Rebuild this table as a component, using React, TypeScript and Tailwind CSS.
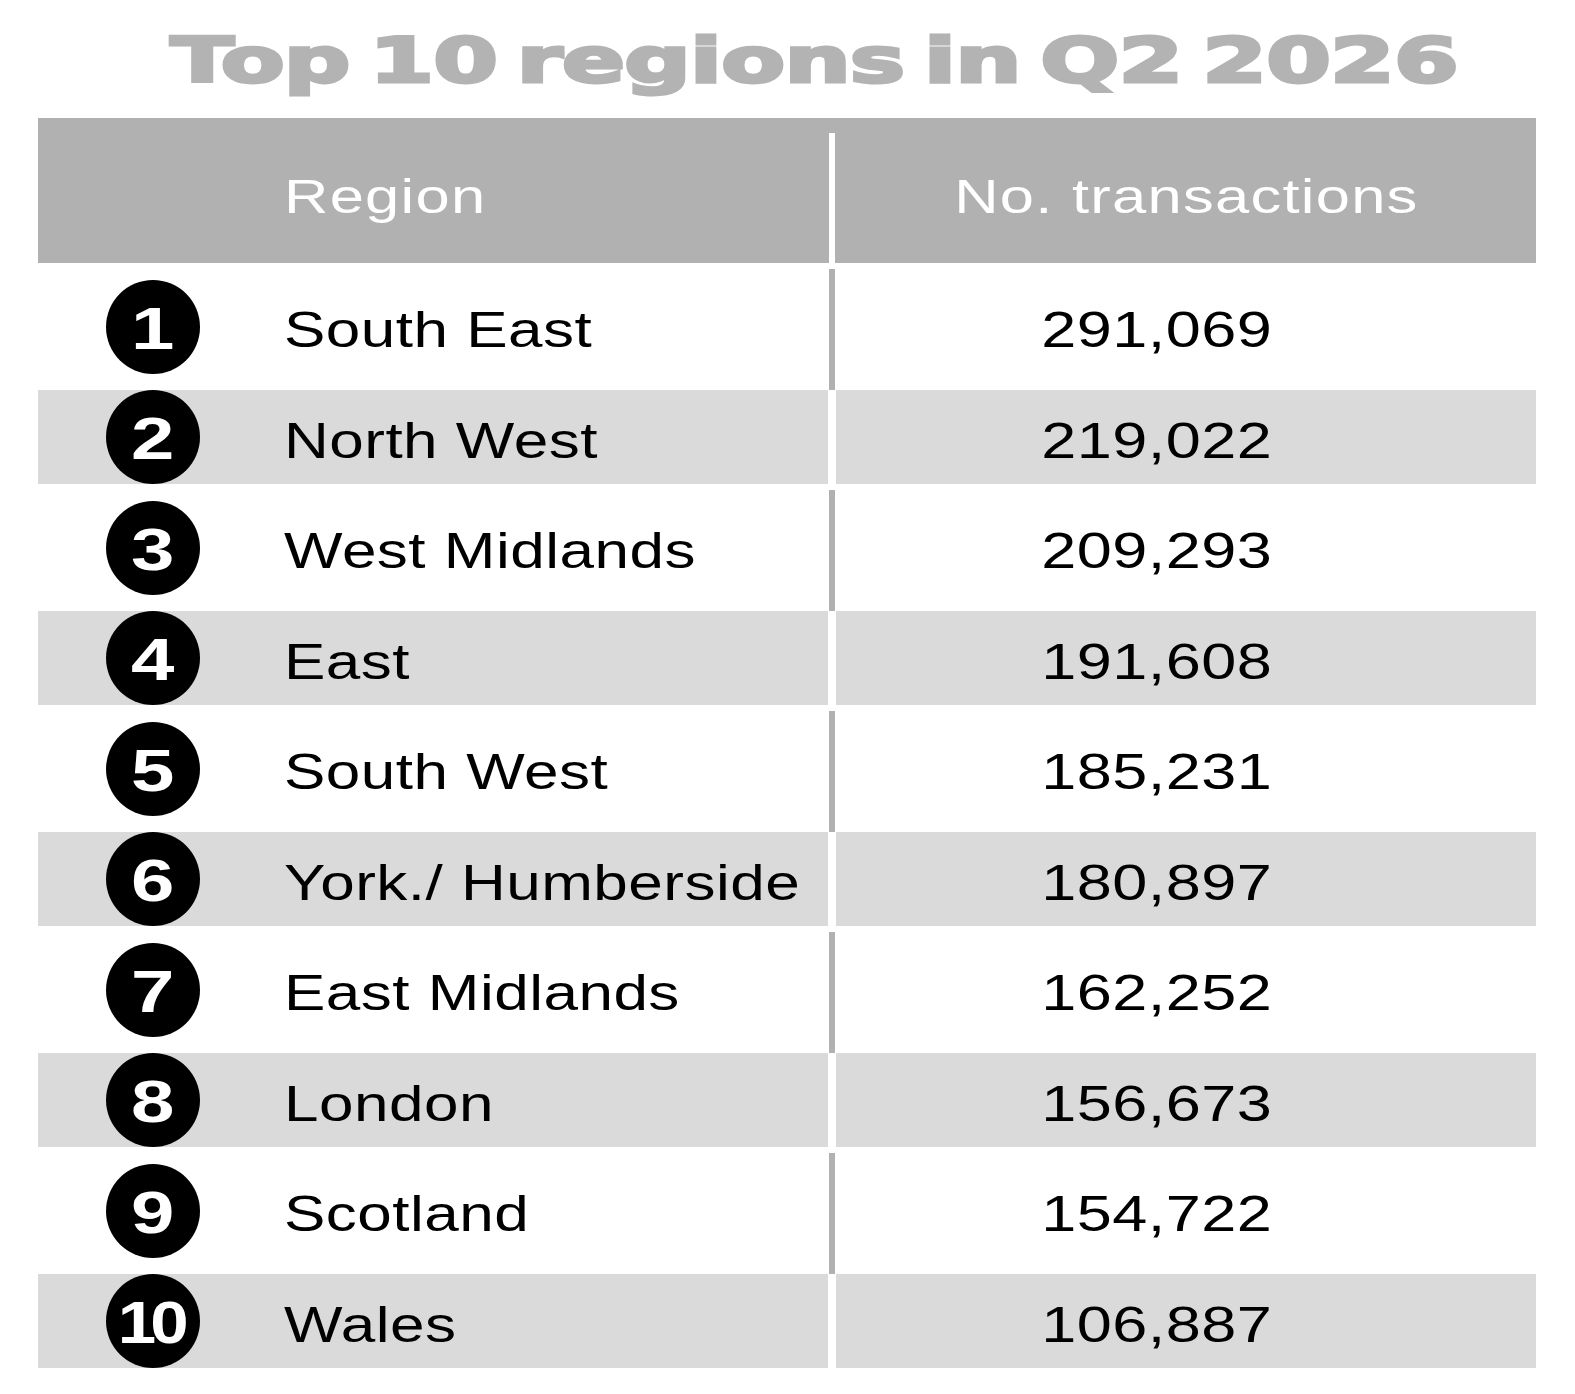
const rows: [string, string][] = [
  ["South East", "291,069"],
  ["North West", "219,022"],
  ["West Midlands", "209,293"],
  ["East", "191,608"],
  ["South West", "185,231"],
  ["York./ Humberside", "180,897"],
  ["East Midlands", "162,252"],
  ["London", "156,673"],
  ["Scotland", "154,722"],
  ["Wales", "106,887"],
];

function Row({ idx, name, value }: { idx: number; name: string; value: string }) {
  const gray = idx % 2 === 1;
  const n = idx + 1;
  return (
    <div className={gray ? "flex h-[94px]" : "flex h-[127px]"}>
      <div className={gray ? "w-[790px] flex items-center pl-[68px] bg-[#dadada]" : "w-[790px] flex items-center pl-[68px]"}>
        <div className="w-[94px] h-[94px] rounded-full bg-black flex items-center justify-center shrink-0">
          {n === 10 ? (
            <span className="inline-block mt-[4px] text-white font-bold text-[60px] leading-none tracking-[-5px] scale-x-[1.15] -ml-[5px]">10</span>
          ) : (
            <span className="inline-block mt-[4px] text-white font-bold text-[60px] leading-none scale-x-[1.3]">{n}</span>
          )}
        </div>
        <span className="inline-block origin-left scale-x-[1.24] ml-[84px] mt-[7px] text-[50px] leading-none tracking-[0.4px] whitespace-nowrap">{name}</span>
      </div>
      <div className="w-[8px] flex justify-center">
        {!gray && <div className="w-[6px] mt-[6px] bg-[#b1b1b1]" />}
      </div>
      <div className={gray ? "flex-1 flex items-center justify-center pr-[58px] bg-[#dadada]" : "flex-1 flex items-center justify-center pr-[58px]"}>
        <span className="inline-block scale-x-[1.26] mt-[7px] text-[50px] leading-none tracking-[0.4px] whitespace-nowrap">{value}</span>
      </div>
    </div>
  );
}

export default function App() {
  return (
    <div className="w-[1575px] h-[1394px] bg-white font-['Liberation_Sans',Arial,sans-serif] text-black">
      <div className="h-[118px] pt-[30px] pl-[54px] flex justify-center">
        <h1 className="inline-block h-[62px] scale-x-[1.5] text-[62px] leading-none font-bold tracking-[-0.5px] [word-spacing:-8px] text-[#b3b3b3] font-['DejaVu_Sans',sans-serif] [-webkit-text-stroke:3px_#b3b3b3] whitespace-nowrap">
          Top 10 regions in Q2 2026
        </h1>
      </div>
      <div className="ml-[38px] w-[1498px]">
        <div className="h-[145px] bg-[#b1b1b1] flex">
          <div className="w-[790px] flex items-center pl-[246px] pt-[12px]">
            <span className="inline-block origin-left scale-x-[1.28] text-white text-[48px] leading-none tracking-[1px]">Region</span>
          </div>
          <div className="w-[8px] flex justify-center pt-[15px]">
            <div className="w-[6px] bg-white" />
          </div>
          <div className="flex-1 flex items-center justify-center pt-[12px]">
            <span className="inline-block scale-x-[1.28] text-white text-[48px] leading-none tracking-[1px] whitespace-nowrap">No. transactions</span>
          </div>
        </div>
        {rows.map(([name, value], i) => (
          <Row key={name} idx={i} name={name} value={value} />
        ))}
      </div>
    </div>
  );
}
